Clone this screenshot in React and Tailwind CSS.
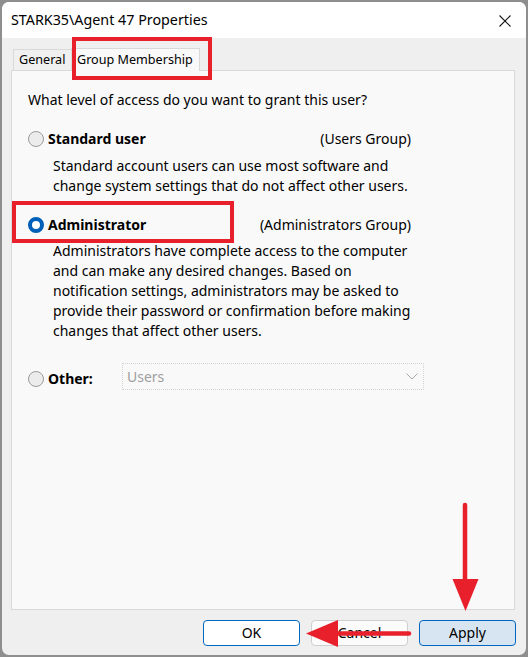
import React from 'react';

function Radio({ checked }) {
  if (checked) {
    return <div className="w-[16px] h-[16px] rounded-full border-[4px] border-[#005fb8] bg-white shrink-0" />;
  }
  return <div className="w-[16px] h-[16px] rounded-full border border-[#9b9b9b] bg-[#ececec] shrink-0" />;
}

export default function App() {
  return (
    <div className="relative w-[528px] h-[657px] bg-[#8e8e8e] p-[2px] overflow-hidden font-['Noto_Sans',sans-serif] text-black select-none">
      <div className="flex flex-col h-full bg-[#efefef] rounded-[7px] overflow-hidden">
        {/* title bar */}
        <div className="h-[36px] shrink-0 bg-white flex items-center justify-between pl-[9px] pr-[15px]">
          <span className="text-[14.3px] leading-[20px]">STARK35\Agent 47 Properties</span>
          <svg width="12" height="12" viewBox="0 0 12 12" className="mt-[1px]">
            <path d="M0.5 0.5 L11.5 11.5 M11.5 0.5 L0.5 11.5" stroke="#1a1a1a" strokeWidth="1.1" fill="none" />
          </svg>
        </div>

        {/* tabs + panel */}
        <div className="flex-1 flex flex-col pl-[9px] pr-[11px] pt-[9px]">
          <div className="flex items-end h-[23px] pl-[2px]">
            <div className="h-[21px] w-[59px] border border-b-0 border-[#d9d9d9] bg-[#f0f0f0] text-[12.6px] leading-[20px] pl-[5px]">
              General
            </div>
            <div className="h-[23px] w-[129px] -ml-px border border-b-0 border-[#d9d9d9] bg-[#f9f9f9] text-[12.6px] leading-[22px] pl-[5px] relative z-10 -mb-px">
              Group Membership
            </div>
          </div>
          <div className="flex-1 bg-[#f9f9f9] border border-[#d9d9d9] pl-[16px] pt-[19px]">
            <div className="w-[396px] flex flex-col text-[14px] leading-[20px] whitespace-nowrap">
              <div>What level of access do you want to grant this user?</div>

              <div className="mt-[19px] w-[383px] flex items-center justify-between h-[20px]">
                <div className="flex items-center gap-[4px]">
                  <Radio />
                  <span className="font-bold">Standard user</span>
                </div>
                <span>(Users Group)</span>
              </div>
              <div className="mt-[7px] pl-[25px]">
                Standard account users can use most software and<br />
                change system settings that do not affect other users.
              </div>

              <div className="mt-[19px] w-[383px] flex items-center justify-between h-[20px]">
                <div className="flex items-center gap-[4px]">
                  <Radio checked />
                  <span className="font-bold">Administrator</span>
                </div>
                <span>(Administrators Group)</span>
              </div>
              <div className="mt-[6px] pl-[25px]">
                Administrators have complete access to the computer<br />
                and can make any desired changes. Based on<br />
                notification settings, administrators may be asked to<br />
                provide their password or confirmation before making<br />
                changes that affect other users.
              </div>

              <div className="mt-[22px] flex items-start">
                <div className="w-[94px] h-[20px] mt-[6px] flex items-center gap-[4px]">
                  <Radio />
                  <span className="font-bold">Other:</span>
                </div>
                <div className="w-[302px] h-[27px] border border-dotted border-[#d4d4d4] flex items-center justify-between pl-[4px] pr-[5px] text-[#9e9e9e]">
                  <span>Users</span>
                  <svg width="12" height="7" viewBox="0 0 12 7">
                    <path d="M0.5 0.5 L6 6 L11.5 0.5" stroke="#a8a8a8" strokeWidth="1" fill="none" />
                  </svg>
                </div>
              </div>
            </div>
          </div>
        </div>

        {/* buttons */}
        <div className="h-[45px] shrink-0 flex items-start justify-end gap-[11px] pr-[10px] pt-[10px] text-[14px]">
          <button className="w-[97px] h-[26px] rounded-[4px] border border-[#0067c0] bg-white leading-[24px]">OK</button>
          <button className="w-[97px] h-[26px] rounded-[4px] border border-[#cfcfcf] bg-[#fbfbfb] leading-[24px]">Cancel</button>
          <button className="w-[97px] h-[26px] rounded-[4px] border border-[#0067c0] bg-[#d7e5f2] leading-[24px]">Apply</button>
        </div>
      </div>

      {/* annotations */}
      <div className="absolute left-[72px] top-[37px] w-[140px] h-[43px] border-[4px] border-[#e8202b] z-20" />
      <div className="absolute left-[12px] top-[201px] w-[222px] h-[42px] border-[4px] border-[#e8202b] z-20" />
      <svg className="absolute left-0 top-0 z-30 pointer-events-none" width="528" height="657" viewBox="0 0 528 657">
        <line x1="465" y1="505" x2="465" y2="585" stroke="#e8202b" strokeWidth="4.5" strokeLinecap="round" />
        <polygon points="452.5,579 478.5,579 465.5,611" fill="#e8202b" />
        <line x1="330" y1="633.5" x2="409" y2="633.5" stroke="#e8202b" strokeWidth="4.5" strokeLinecap="round" />
        <polygon points="306,633.5 338,620 338,647" fill="#e8202b" />
      </svg>
    </div>
  );
}
